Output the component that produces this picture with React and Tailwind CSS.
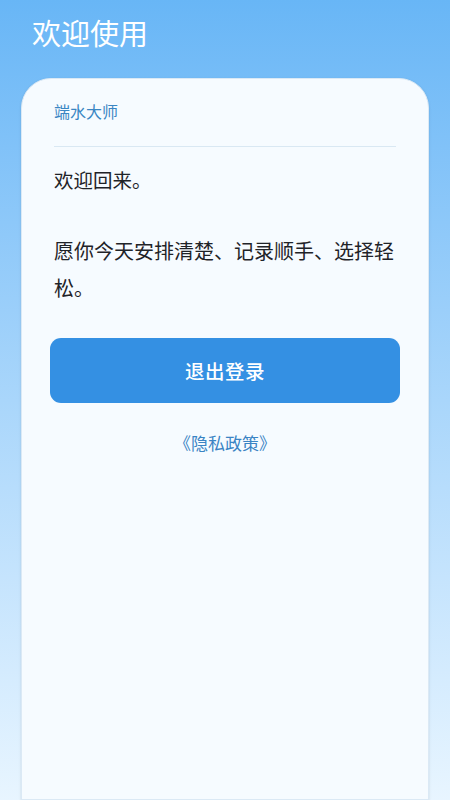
import React from "react";

const font = { fontFamily: '"Noto Sans CJK SC", "Noto Sans", sans-serif' };

export default function App() {
  return (
    <div
      className="min-h-[800px] h-[800px] overflow-hidden bg-gradient-to-b from-[#68b6f6] via-[#a9d6fb] to-[#e8f5ff] flex flex-col"
      style={font}
    >
      <h1 className="px-[32px] pt-[11px] text-[29px] leading-[42px] text-white font-normal">
        欢迎使用
      </h1>

      <div className="mx-[21px] mt-[25px] flex-1 rounded-t-[30px] bg-[#f6fbff] border border-[#dbe9f5] shadow-sm px-[32px] pt-[18px]">
        <p className="text-[16px] leading-[28px] text-[#3a86c3]">端水大师</p>
        <div className="mt-[21px] h-px bg-[#d9e8f3]" />

        <p className="mt-[20px] text-[19.5px] leading-[26px] text-[#1f2328]">欢迎回来。</p>
        <p className="mt-[39px] text-[20px] leading-[37px] text-[#1f2328]">
          愿你今天安排清楚、记录顺手、选择轻松。
        </p>

        <button className="mt-[32px] -mx-[4px] w-[calc(100%+8px)] h-[65px] rounded-[11px] bg-[#3490e3] text-white text-[19.5px] font-medium tracking-wide">
          退出登录
        </button>

        <div className="mt-[27px] text-center text-[17px] text-[#3a84c4]">《隐私政策》</div>
      </div>
    </div>
  );
}
